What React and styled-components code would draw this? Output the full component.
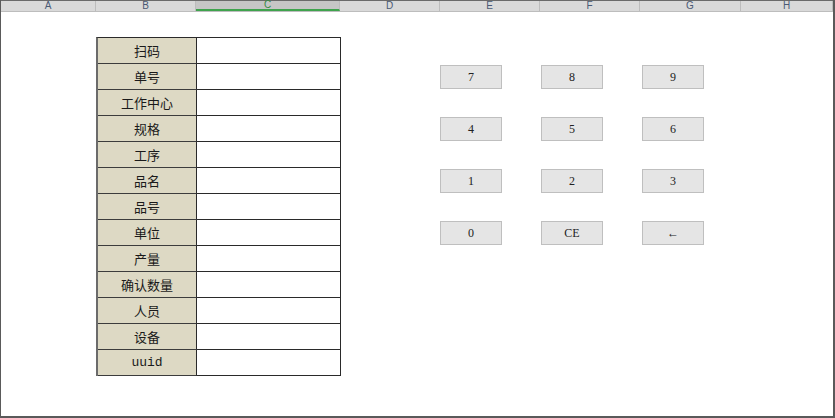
import React from "react";
import styled, { createGlobalStyle } from "styled-components";

const Global = createGlobalStyle`
  html, body { margin: 0; padding: 0; background: #ffffff; }
  body { font-family: "Liberation Sans", Arial, sans-serif; }
`;

const Frame = styled.div`
  width: 835px;
  height: 418px;
  box-sizing: border-box;
  border-left: 1px solid #5a5a5a;
  border-right: 2px solid #5a5a5a;
  border-bottom: 2px solid #5a5a5a;
  display: flex;
  flex-direction: column;
  overflow: hidden;
  background: #fff;
`;

const HeaderRow = styled.div`
  display: flex;
  height: 12px;
  border-bottom: 1px solid #bdbdbd;
  border-top: 1px solid #6a6a6a;
  box-sizing: border-box;
  flex: none;
`;

const ColHead = styled.div`
  width: ${(p) => p.$w}px;
  flex: none;
  box-sizing: border-box;
  height: 100%;
  background: ${(p) => (p.$active ? "#c6c6c6" : "#d9d9d9")};
  border-right: 1px solid #bcbcbc;
  border-bottom: ${(p) => (p.$active ? "2px solid #3fa34d" : "none")};
  display: flex;
  justify-content: center;
  align-items: center;
  font-family: "Liberation Sans", Arial, sans-serif;
  font-size: 10px;
  line-height: 10px;
  color: ${(p) => (p.$active ? "#3a8a44" : "#4a5a75")};
`;

const Sheet = styled.div`
  flex: 1;
  display: flex;
  align-items: flex-start;
  padding: 25px 0 0 95px;
`;

const Grid = styled.div`
  display: grid;
  grid-template-columns: 99px 144px;
  grid-auto-rows: 26px;
  border-left: 2px solid #6b6b6b;
  border-top: 1px solid #2a2a2a;
  flex: none;
`;

const LabelCell = styled.div`
  box-sizing: border-box;
  background: #ddd9c4;
  border-right: 1px solid #2a2a2a;
  border-bottom: 1px solid #3c3c3c;
  display: flex;
  align-items: center;
  justify-content: center;
  font-family: ${(p) =>
    p.$latin
      ? '"Liberation Mono", "DejaVu Sans Mono", monospace'
      : '"Noto Sans CJK SC", "Liberation Sans", sans-serif'};
  font-size: 13px;
  line-height: 16px;
  color: #1a1a1a;
`;

const ValueCell = styled.div`
  box-sizing: border-box;
  background: #fff;
  border-right: 1px solid #2a2a2a;
  border-bottom: 1px solid #2a2a2a;
`;

const Keypad = styled.div`
  display: grid;
  grid-template-columns: repeat(3, 62px);
  grid-auto-rows: 24px;
  column-gap: 39px;
  row-gap: 28px;
  margin: 28px 0 0 99px;
`;

const Key = styled.div`
  box-sizing: border-box;
  background: #e5e5e5;
  border: 1px solid #bfbfbf;
  display: flex;
  align-items: center;
  justify-content: center;
  font-family: "Liberation Serif", "Times New Roman", serif;
  font-size: 12px;
  color: #222;
`;

const cols = [
  ["A", 95],
  ["B", 100],
  ["C", 144, true],
  ["D", 100],
  ["E", 100],
  ["F", 100],
  ["G", 101],
  ["H", 92],
];

const labels = [
  "扫码",
  "单号",
  "工作中心",
  "规格",
  "工序",
  "品名",
  "品号",
  "单位",
  "产量",
  "确认数量",
  "人员",
  "设备",
  "uuid",
];

const keys = ["7", "8", "9", "4", "5", "6", "1", "2", "3", "0", "CE", "←"];

export default function App() {
  return (
    <>
      <Global />
      <Frame>
        <HeaderRow>
          {cols.map(([l, w, a]) => (
            <ColHead key={l} $w={w} $active={a}>
              {l}
            </ColHead>
          ))}
        </HeaderRow>
        <Sheet>
          <Grid>
            {labels.map((l) => (
              <React.Fragment key={l}>
                <LabelCell $latin={l === "uuid"}>{l}</LabelCell>
                <ValueCell />
              </React.Fragment>
            ))}
          </Grid>
          <Keypad>
            {keys.map((k) => (
              <Key key={k}>{k}</Key>
            ))}
          </Keypad>
        </Sheet>
      </Frame>
    </>
  );
}
